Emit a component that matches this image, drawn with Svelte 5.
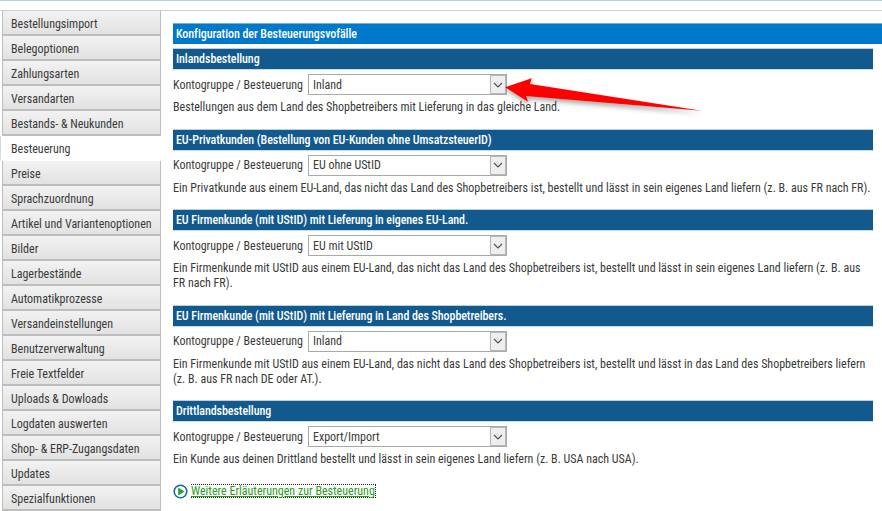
<script>
  const NAV = [
    "Bestellungsimport", "Belegoptionen", "Zahlungsarten", "Versandarten", "Bestands- & Neukunden",
    "Besteuerung", "Preise", "Sprachzuordnung", "Artikel und Variantenoptionen", "Bilder",
    "Lagerbestände", "Automatikprozesse", "Versandeinstellungen", "Benutzerverwaltung", "Freie Textfelder",
    "Uploads & Dowloads", "Logdaten auswerten", "Shop- & ERP-Zugangsdaten", "Updates", "Spezialfunktionen",
  ];
  const SECTIONS = [
    { title: "Inlandsbestellung", value: "Inland",
      text: "Bestellungen aus dem Land des Shopbetreibers mit Lieferung in das gleiche Land." },
    { title: "EU-Privatkunden (Bestellung von EU-Kunden ohne UmsatzsteuerID)", value: "EU ohne UStID",
      text: "Ein Privatkunde aus einem EU-Land, das nicht das Land des Shopbetreibers ist, bestellt und lässt in sein eigenes Land liefern (z. B. aus FR nach FR)." },
    { title: "EU Firmenkunde (mit UStID) mit Lieferung in eigenes EU-Land.", value: "EU mit UStID",
      text: "Ein Firmenkunde mit UStID aus einem EU-Land, das nicht das Land des Shopbetreibers ist, bestellt und lässt in sein eigenes Land liefern (z. B. aus FR nach FR)." },
    { title: "EU Firmenkunde (mit UStID) mit Lieferung in Land des Shopbetreibers.", value: "Inland",
      text: "Ein Firmenkunde mit UStID aus einem EU-Land, das nicht das Land des Shopbetreibers ist, bestellt und lässt in das Land des Shopbetreibers liefern (z. B. aus FR nach DE oder AT.)." },
    { title: "Drittlandsbestellung", value: "Export/Import",
      text: "Ein Kunde aus deinen Drittland bestellt und lässt in sein eigenes Land liefern (z. B. USA nach USA)." },
  ];
  const OPTIONS = ["Inland", "EU ohne UStID", "EU mit UStID", "Export/Import"];
</script>

<div class="page">
  <div class="topline"></div>
  <div class="layout">
    <nav class="nav">
      {#each NAV as item}
        <a href="#top" class:active={item === "Besteuerung"}>{item}</a>
      {/each}
    </nav>
    <main class="main">
      <h1>Konfiguration der Besteuerungsvofälle</h1>
      {#each SECTIONS as s}
        <section>
          <h2>{s.title}</h2>
          <div class="row">
            <label for={s.title}>Kontogruppe / Besteuerung</label>
            <span class="selectbox">
              <select id={s.title} value={s.value}>
                {#each OPTIONS as o}<option value={o}>{o}</option>{/each}
              </select>
              <span class="chev">
                <svg width="10" height="6" viewBox="0 0 10 6"><path d="M1 1l4 4 4-4" fill="none" stroke="#555" stroke-width="1.2"/></svg>
              </span>
            </span>
          </div>
          <p>{s.text}</p>
        </section>
      {/each}
      <a class="more" href="#top">
        <svg width="15" height="15" viewBox="0 0 15 15">
          <circle cx="7.500" cy="7.500" r="6.300" fill="#fff" stroke="#17699f" stroke-width="1.600"/>
          <path d="M5.200 3.600v7.800L11.600 7.500z" fill="#22a52a"/>
        </svg>
        <span>Weitere Erläuterungen zur Besteuerung</span>
      </a>
    </main>
  </div>

  <svg class="arrow" width="882" height="511" viewBox="0 0 882 511">
    <defs>
      <filter id="sh" x="-10%" y="-50%" width="120%" height="220%">
        <feDropShadow dx="1" dy="3" stdDeviation="2.500" flood-color="#000" flood-opacity="0.35"/>
      </filter>
    </defs>
    <path d="M505 87.300L531.700 78.300L530 84L701.700 110.700L526 96L528 101.700z" fill="#fe0000" filter="url(#sh)"/>
  </svg>
</div>

<style>
  :global(body) { margin: 0; background: #fff; }
  .page {
    position: relative; width: 882px; height: 511px; overflow: hidden;
    font-family: Roboto, "Liberation Sans", sans-serif; font-size: 12px; font-stretch: 87%; color: #3a3a3a;
  }
  .topline { height: 1px; background: #a8d0ef; }
  .layout { display: flex; margin-top: 9px; border-top: 1px solid #cfcfcf; }
  .nav { width: 161px; flex: none; padding: 0 0 0 2px; box-sizing: border-box; display: flex; flex-direction: column; }
  .nav a {
    height: 25px; box-sizing: border-box; padding: 2px 0 0 8px; display: flex; align-items: center;
    color: #3a3a3a; text-decoration: none; white-space: nowrap;
    background: linear-gradient(#f2f2f2, #e2e2e2);
    border: 1px solid #bdbdbd; border-width: 0 1px 2px 1px;
  }
  .nav a.active {
    background: #fff; margin-left: -2px; padding-left: 10px; margin-right: -1px;
    border-color: #fff; border-left: 1px solid #d8d8d8;
  }
  .main { flex: 1; min-width: 0; padding: 12px 9px 0 12px; box-sizing: border-box; }
  h1 {
    margin: 0 -9px 0 0; height: 21px; box-sizing: border-box; padding: 0 3px; display: flex; align-items: center;
    background: #0079cb; border-top: 1px solid #6fb0dc; color: #fff; font-size: 12px; font-weight: 500; letter-spacing: -0.07px;
  }
  section { margin-top: 5px; margin-bottom: 14.5px; }
  section + section { margin-top: 0; }
  h2 {
    margin: 0; height: 21px; box-sizing: border-box; padding: 0 3px; display: flex; align-items: center;
    background: #12598d; border-bottom: 1px solid #c8dcea; color: #fff; font-size: 12px; font-weight: 500; letter-spacing: -0.07px;
    box-shadow: 0 -1px 0 #bcd0e0;
  }
  .row { display: flex; align-items: center; gap: 5px; margin-top: 4px; height: 21px; }
  .selectbox { position: relative; display: block; width: 199px; height: 21px; }
  select {
    appearance: none; width: 100%; height: 100%; box-sizing: border-box; margin: 0; padding: 0 4px;
    border: 1px solid #a9a9a9; background: #fff; border-radius: 0; font: inherit; color: #3a3a3a;
  }
  .chev {
    position: absolute; right: 1px; top: 1px; width: 16px; height: 19px; box-sizing: border-box;
    display: flex; align-items: center; justify-content: center;
    background: #eee; border: 1px solid #b8b8b8;
  }
  p { margin: 5px 0 0; line-height: 15px; }
  .more { display: flex; align-items: center; gap: 3px; padding-top: 2px; text-decoration: none; }
  .more span {
    color: #2a9d1a; border: 1px dotted #222; border-left: 0; line-height: 12px; text-decoration: underline;
  }
  .arrow { position: absolute; left: 0; top: 0; pointer-events: none; }
</style>
